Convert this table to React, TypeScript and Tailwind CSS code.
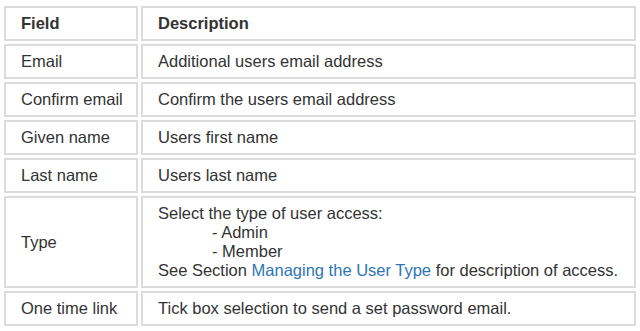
import React from "react";

const rows: { field: string; desc: React.ReactNode; h?: string }[] = [
  { field: "Email", desc: "Additional users email address" },
  { field: "Confirm email", desc: "Confirm the users email address" },
  { field: "Given name", desc: "Users first name" },
  { field: "Last name", desc: "Users last name" },
  {
    field: "Type",
    h: "h-[92px]",
    desc: (
      <div className="leading-[19px]">
        <div>Select the type of user access:</div>
        <div className="pl-[54px]">- Admin</div>
        <div className="pl-[54px]">- Member</div>
        <div>
          See Section <span className="text-[#2e75b6]">Managing the User Type</span> for description of access.
        </div>
      </div>
    ),
  },
  { field: "One time link", desc: "Tick box selection to send a set password email." },
];

export default function App() {
  return (
    <div
      className="w-[640px] h-[331px] bg-white pl-[1px] pt-[3px] text-[#333333] text-[16.5px]"
      style={{ fontFamily: '"Liberation Sans", Arial, sans-serif' }}
    >
      <table className="w-[638px] table-fixed border-separate border-spacing-[3px]">
        <tbody>
          <tr>
            <td className="w-[134px] h-[35px] border-2 border-[#dcdcdc] pl-[15px] py-0 font-bold align-middle">
              Field
            </td>
            <td className="h-[35px] border-2 border-[#dcdcdc] pl-[15px] py-0 font-bold align-middle">
              Description
            </td>
          </tr>
          {rows.map((r) => (
            <tr key={r.field}>
              <td className={`w-[134px] ${r.h ?? "h-[35px]"} border-2 border-[#dcdcdc] pl-[15px] py-0 align-middle`}>
                {r.field}
              </td>
              <td className={`${r.h ?? "h-[35px]"} border-2 border-[#dcdcdc] pl-[15px] py-0 align-middle`}>
                {r.desc}
              </td>
            </tr>
          ))}
        </tbody>
      </table>
    </div>
  );
}
